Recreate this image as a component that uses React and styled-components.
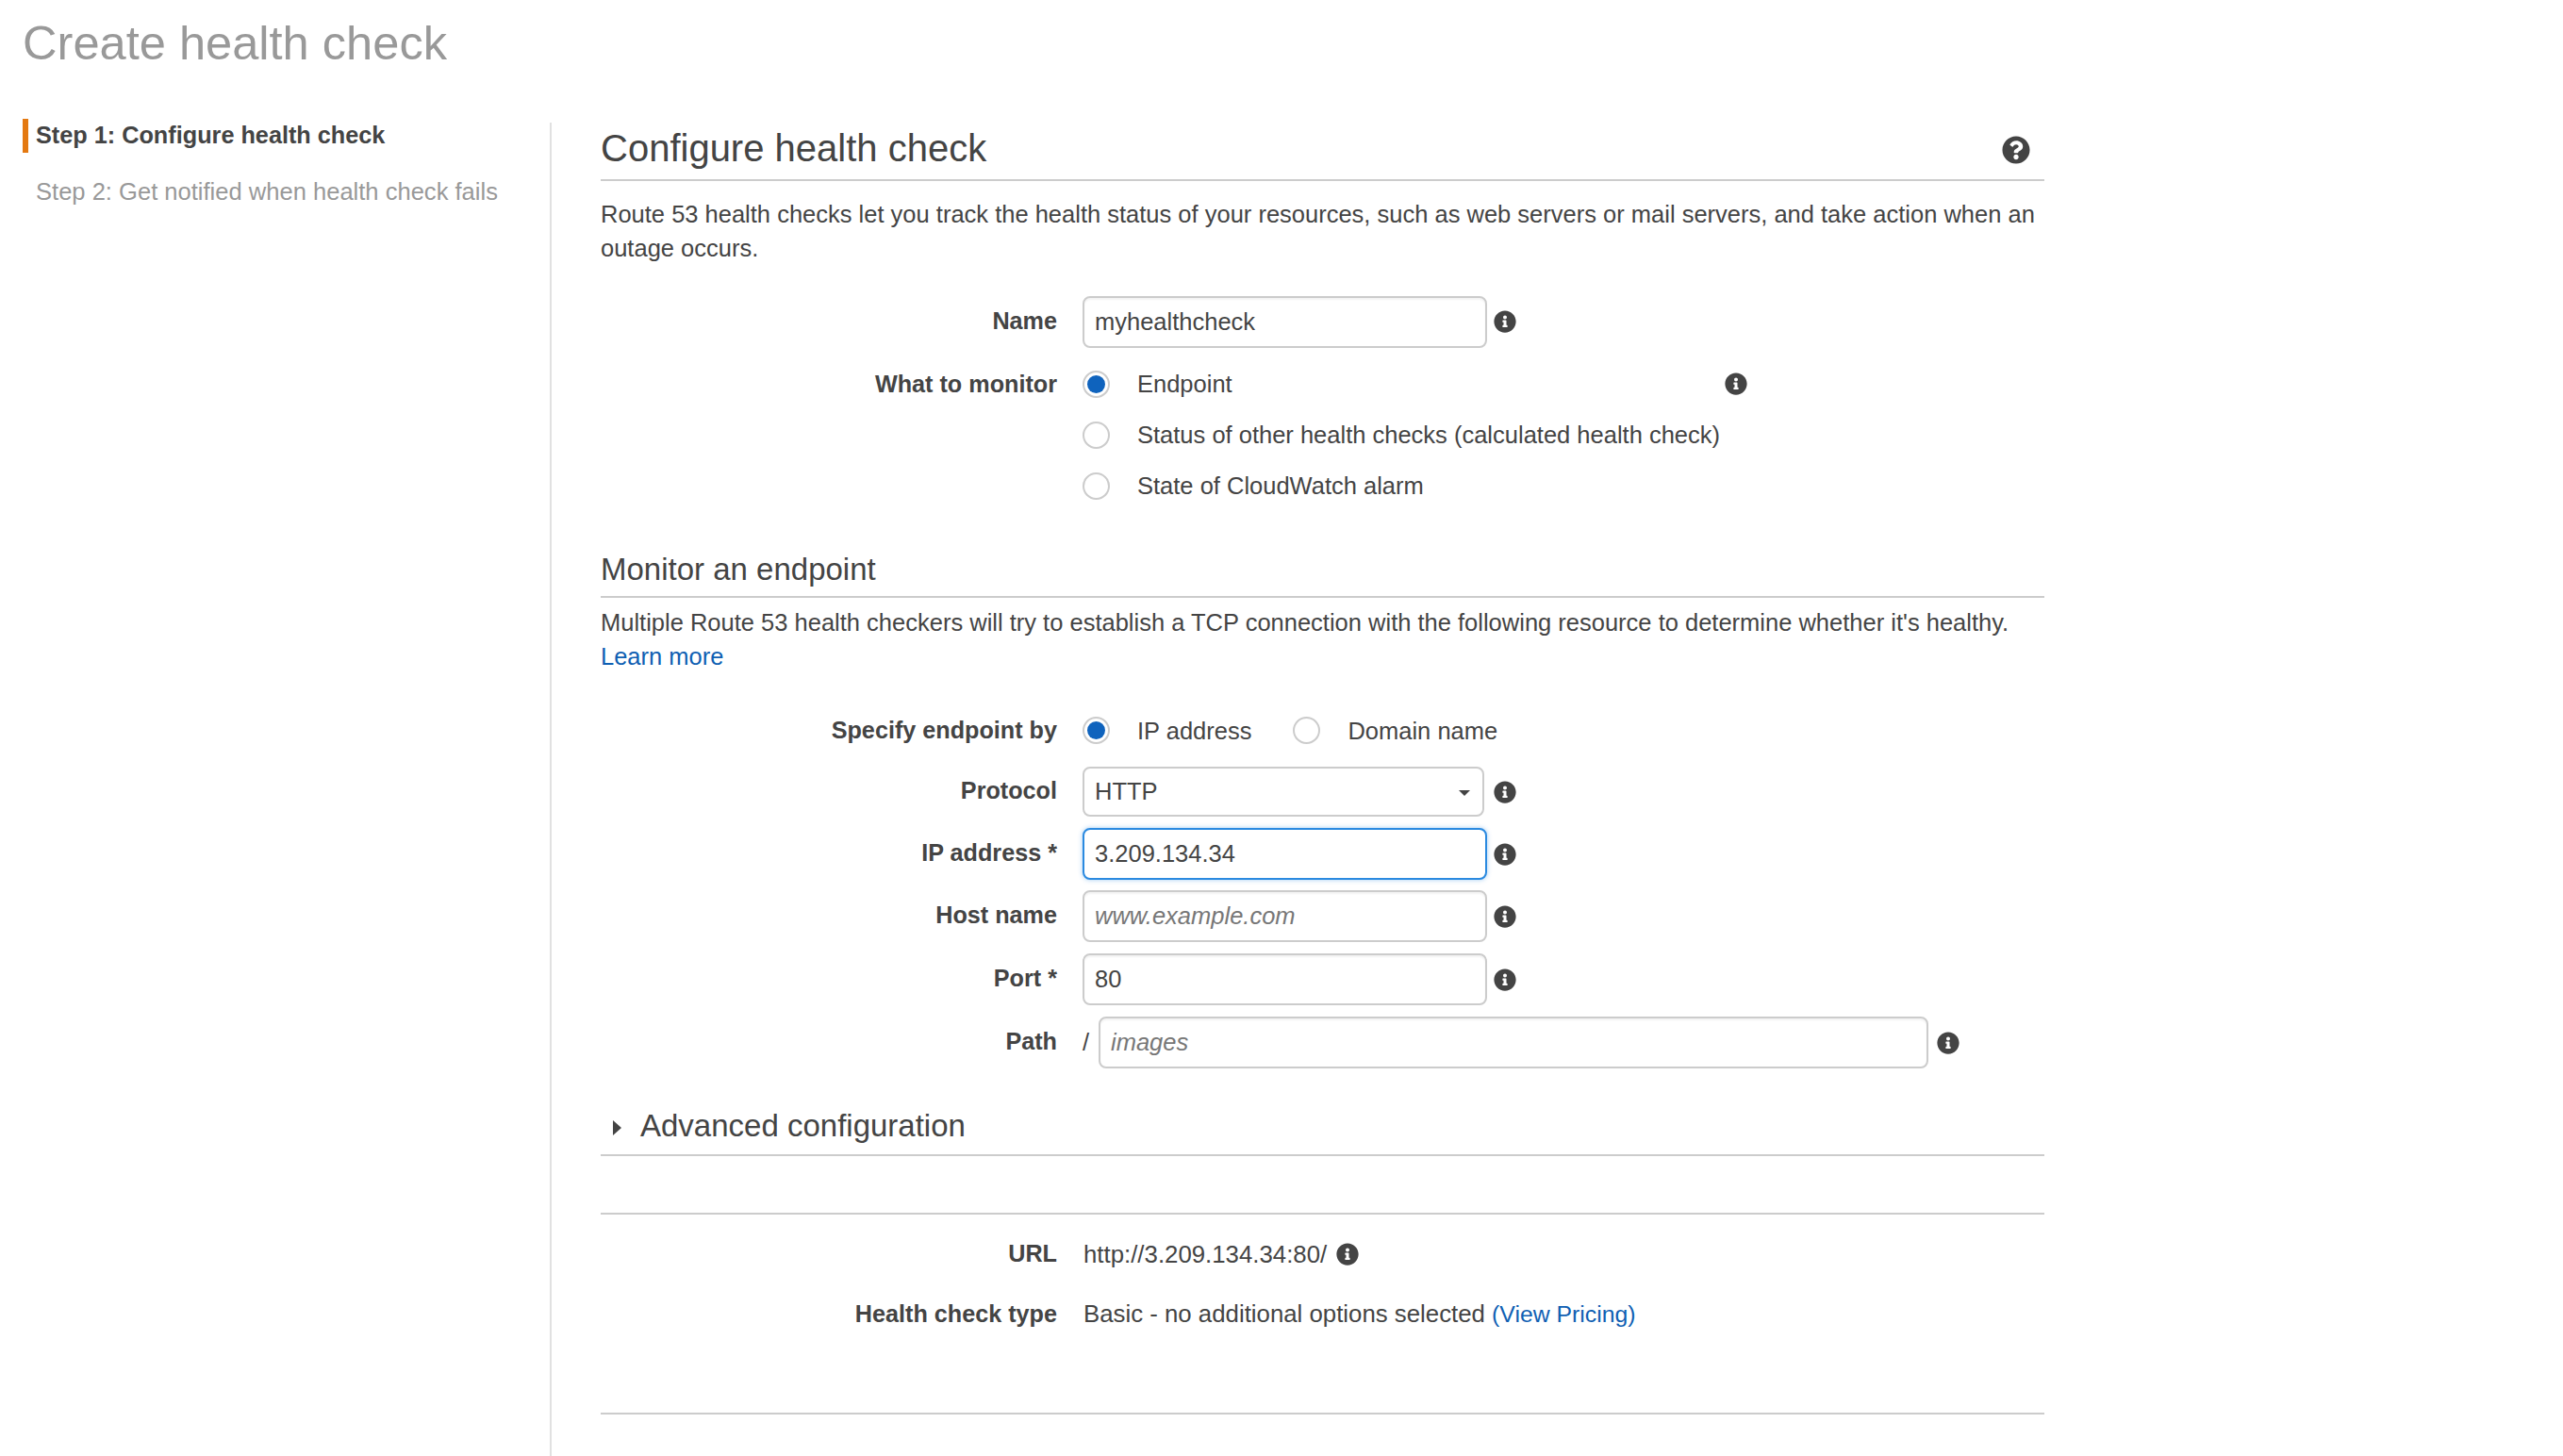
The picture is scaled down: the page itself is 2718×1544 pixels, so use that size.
import React from 'react'
import styled, { createGlobalStyle } from 'styled-components'
import { FaInfoCircle, FaQuestionCircle } from 'react-icons/fa'

const GlobalStyle = createGlobalStyle`
  html, body {
    margin: 0;
    background: #fff;
    color: #444;
    font-family: "Liberation Sans", Arial, sans-serif;
    font-size: 25.5px;
    line-height: 36.4px;
  }
`

const Page = styled.div`
  height: 1544px;
  overflow: hidden;
  display: flex;
  flex-direction: column;
`

const Title = styled.h1`
  margin: 18px 0 0 24px;
  font-size: 50.6px;
  line-height: 56px;
  font-weight: 400;
  color: #999;
`

const Layout = styled.div`
  flex: 1;
  display: flex;
  margin-top: 56px;
`

const Sidebar = styled.nav`
  width: 559px;
  margin-left: 24px;
  margin-top: -4px;
  display: flex;
  flex-direction: column;
  gap: 24px;
`

const Step = styled.div`
  height: 36px;
  line-height: 34px;
  padding-left: 8px;
  border-left: 6px solid ${p => (p.$active ? '#e47911' : 'transparent')};
  font-weight: ${p => (p.$active ? 700 : 400)};
  font-size: ${p => (p.$active ? 25.25 : 25.55)}px;
  color: ${p => (p.$active ? '#444' : '#999')};
`

const Main = styled.main`
  width: 1531px;
  padding-left: 52px;
  border-left: 2px solid #e1e1e1;
`

const SectionHead = styled.div`
  display: flex;
  justify-content: space-between;
  align-items: center;
  height: ${p => p.$height}px;
  margin-top: ${p => p.$top || 0}px;
  border-bottom: 2px solid #ccc;
`

const H2 = styled.h2`
  margin: 0 0 7px;
  font-size: 40px;
  line-height: 50px;
  font-weight: 400;
`

const H3 = styled.h3`
  margin: 3px 0 0;
  font-size: 33px;
  line-height: 40px;
  font-weight: 400;
`

const HelpIcon = styled(FaQuestionCircle)`
  width: 30px;
  height: 30px;
  margin-right: 15px;
  margin-top: -2px;
  color: #444;
`

const Paragraph = styled.p`
  margin: ${p => p.$top || 0}px 0 0;
`

const Link = styled.a`
  color: #0f5fb3;
  text-decoration: none;
`

const PriceLink = styled(Link)`
  font-size: 24.8px;
`

const Row = styled.div`
  display: grid;
  grid-template-columns: 484px 1fr;
  column-gap: 27px;
  margin-top: ${p => p.$top || 0}px;
  min-height: ${p => p.$height || 36}px;
  align-items: ${p => (p.$stack ? 'start' : 'center')};
`

const Label = styled.div`
  font-size: 25.2px;
  font-weight: 700;
  line-height: 29px;
  padding-bottom: ${p => p.$raise ?? 2}px;
  text-align: right;
`

const Control = styled.div`
  display: flex;
  align-items: center;
  min-width: 0;
`

const Value = styled.div`
  display: flex;
  align-items: center;
  font-size: 25.8px;
  padding-left: 1px;
`

const Field = styled.input`
  box-sizing: border-box;
  width: ${p => p.$width || 429}px;
  height: 55px;
  padding: 0 11px;
  border: 2px solid ${p => (p.$focus ? '#2b8ae0' : '#ccc')};
  border-radius: 8px;
  outline: none;
  background: #fff;
  box-shadow: ${p => (p.$focus ? '0 0 5px rgba(43,138,224,0.45)' : 'inset 0 2px 2px rgba(0,0,0,0.05)')};
  color: #444;
  font: inherit;
  &::placeholder {
    color: #777;
    font-style: italic;
    opacity: 1;
  }
`

const SelectBox = styled.div`
  box-sizing: border-box;
  width: 426px;
  height: 53px;
  padding: 0 11px;
  display: flex;
  justify-content: space-between;
  align-items: center;
  border: 2px solid #ccc;
  border-radius: 8px;
`

const Caret = styled.span`
  width: 0;
  height: 0;
  margin-right: 2px;
  margin-top: 2px;
  border-left: 6px solid transparent;
  border-right: 6px solid transparent;
  border-top: 6px solid #444;
`

const Info = styled(FaInfoCircle)`
  flex: none;
  width: 24px;
  height: 24px;
  margin-left: ${p => p.$gap ?? 7}px;
  color: #444;
`

const Radio = styled.span`
  box-sizing: border-box;
  flex: none;
  width: 29px;
  height: 29px;
  border: 2px solid #ccc;
  border-radius: 50%;
  padding: 3px;
  &::after {
    content: '';
    display: ${p => (p.$checked ? 'block' : 'none')};
    width: 19px;
    height: 19px;
    border-radius: 50%;
    background: #0f63bd;
  }
`

const RadioLabel = styled.span`
  margin-left: 29px;
  margin-right: ${p => p.$gap || 0}px;
`

const RadioStack = styled.div`
  display: flex;
  flex-direction: column;
  gap: 25px;
`

const RadioLine = styled.div`
  display: flex;
  align-items: center;
  height: 29px;
`

const Slash = styled.span`
  width: 17px;
`

const Triangle = styled.span`
  width: 0;
  height: 0;
  margin: 4px 20px 0 13px;
  border-top: 8px solid transparent;
  border-bottom: 8px solid transparent;
  border-left: 9px solid #444;
`

const AdvancedTitle = styled.div`
  display: flex;
  align-items: center;
  margin-top: 16px;
  font-size: 33px;
  line-height: 40px;
`

const App = () => (
  <Page>
    <GlobalStyle />
    <Title>Create health check</Title>
    <Layout>
      <Sidebar>
        <Step $active>Step 1: Configure health check</Step>
        <Step>Step 2: Get notified when health check fails</Step>
      </Sidebar>
      <Main>
        <SectionHead $height={60}>
          <H2>Configure health check</H2>
          <HelpIcon />
        </SectionHead>
        <Paragraph $top={17}>
          Route 53 health checks let you track the health status of your resources, such as web servers or mail servers, and take action when an outage occurs.
        </Paragraph>
        <Row $top={32} $height={55}>
          <Label>Name</Label>
          <Control>
            <Field defaultValue="myhealthcheck" />
            <Info $gap={7} />
          </Control>
        </Row>
        <Row $top={24} $stack>
          <Label>What to monitor</Label>
          <RadioStack>
            <RadioLine>
              <Radio $checked />
              <RadioLabel>Endpoint</RadioLabel>
              <Info $gap={522} />
            </RadioLine>
            <RadioLine>
              <Radio />
              <RadioLabel>Status of other health checks (calculated health check)</RadioLabel>
            </RadioLine>
            <RadioLine>
              <Radio />
              <RadioLabel>State of CloudWatch alarm</RadioLabel>
            </RadioLine>
          </RadioStack>
        </Row>
        <SectionHead $height={58} $top={44}>
          <H3>Monitor an endpoint</H3>
        </SectionHead>
        <Paragraph $top={8}>
          Multiple Route 53 health checkers will try to establish a TCP connection with the following resource to determine whether it's healthy.
          <br />
          <Link href="#">Learn more</Link>
        </Paragraph>
        <Row $top={42} $height={29}>
          <Label $raise={0}>Specify endpoint by</Label>
          <Control>
            <Radio $checked />
            <RadioLabel $gap={44}>IP address</RadioLabel>
            <Radio />
            <RadioLabel>Domain name</RadioLabel>
          </Control>
        </Row>
        <Row $top={19} $height={55}>
          <Label>Protocol</Label>
          <Control>
            <SelectBox>
              HTTP
              <Caret />
            </SelectBox>
            <Info $gap={10} />
          </Control>
        </Row>
        <Row $top={11} $height={55}>
          <Label>IP address *</Label>
          <Control>
            <Field $focus defaultValue="3.209.134.34" />
            <Info />
          </Control>
        </Row>
        <Row $top={11} $height={55}>
          <Label>Host name</Label>
          <Control>
            <Field placeholder="www.example.com" />
            <Info />
          </Control>
        </Row>
        <Row $top={12} $height={55}>
          <Label>Port *</Label>
          <Control>
            <Field defaultValue="80" />
            <Info />
          </Control>
        </Row>
        <Row $top={12} $height={55}>
          <Label>Path</Label>
          <Control>
            <Slash>/</Slash>
            <Field $width={880} placeholder="images" />
            <Info $gap={9} />
          </Control>
        </Row>
        <SectionHead $height={77} $top={14}>
          <AdvancedTitle>
            <Triangle />
            Advanced configuration
          </AdvancedTitle>
        </SectionHead>
        <SectionHead $height={60} />
        <Row $top={24}>
          <Label>URL</Label>
          <Value>
            http://3.209.134.34:80/
            <Info $gap={10} />
          </Value>
        </Row>
        <Row $top={27}>
          <Label>Health check type</Label>
          <Value>
            <span>
              Basic - no additional options selected <PriceLink href="#">(View Pricing)</PriceLink>
            </span>
          </Value>
        </Row>
        <SectionHead $height={85} />
      </Main>
    </Layout>
  </Page>
)

export default App
